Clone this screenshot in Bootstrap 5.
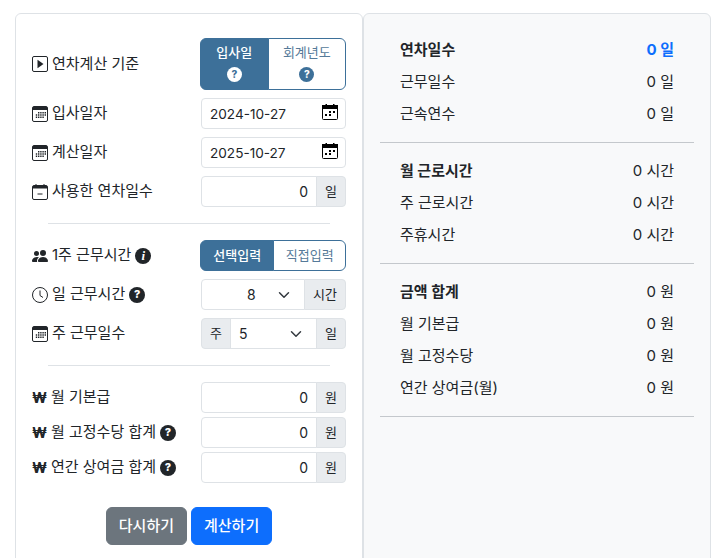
<!DOCTYPE html>
<html lang="ko">
<head>
    <meta charset="UTF-8">
    <meta name="viewport" content="width=device-width, initial-scale=1.0">
    <title>연차계산기</title>
    <link href="https://cdn.jsdelivr.net/npm/bootstrap@5.3.0/dist/css/bootstrap.min.css" rel="stylesheet">
    <style>
        html, body { height: 100%; overflow: hidden; }
        body {
            font-family: Inter, "Noto Sans CJK KR", sans-serif;
            font-size: 15px;
            color: #212529;
            background: #fff;
        }
        .page-wrap { padding: 13px 11px 0 15px; }
        .calc-card { min-height: 600px; border-radius: 6px; border: 1px solid #dee2e6; }
        .calc-input { padding: 24px 16px 20px 16px; }
        .calc-result { padding: 20px 16px; background: #f8f9fa; }
        .field-row { display: flex; align-items: center; justify-content: space-between; margin-bottom: 8px; }
        .field-row.tight { margin-bottom: 4px; }
        .field-label { display: flex; align-items: center; gap: 4px; font-size: 15px; white-space: nowrap; }
        .field-label svg { flex: none; }
        .field-box { width: 145px; flex: none; }
        .field-box .form-control, .field-box .form-select { font-size: 14px; height: 31px; }
        .field-box .input-group-text { font-size: 13px; height: 31px; padding: 0 8px; background: #e9ecef; }
        .date-wrap { position: relative; }
        .date-wrap .form-control { font-size: 13.6px; }
        .date-wrap svg { position: absolute; right: 8px; top: 6px; }
        .field-box .select-offset { padding-left: 45px; }
        .toggle-group { width: 146px; margin-left: -1px; }
        .toggle-group .btn { font-size: 13px; color: #557a99; border-color: #3d7099; background: #fff; padding: 0; height: 31px; }
        .toggle-group .btn.on { color: #fff; background: #3d7099; font-weight: 500; }
        .toggle-tall .btn { height: 52px; padding: 0 0 3px; line-height: 20px; }
        .help-dot {
            display: inline-flex; align-items: center; justify-content: center;
            width: 16px; height: 16px; border-radius: 50%;
            background: #212529; color: #fff; font-size: 11px; font-weight: 800; flex: none;
        }
        .help-dot.info { font-style: italic; font-family: "Liberation Serif", serif; font-size: 13px; }
        .help-dot.small-dot { width: 15px; height: 15px; font-size: 10px; margin-top: 5px; }
        .on .help-dot { background: #fff; color: #3d7099; }
        .toggle-group .btn:not(.on) .help-dot { background: #3d7099; color: #fff; }
        .won-mark { font-weight: 800; font-size: 14px; width: 15px; line-height: 1; }
        .soft-rule { margin: 16px 16px; border-color: #dee2e6; opacity: 1; }
        .action-row { margin-top: 24px; }
        .action-btn { font-size: 15px; font-weight: 500; padding: 0 12px; height: 38px; }
        .result-block { padding: 0 20px 12px; }
        .result-row { display: flex; justify-content: space-between; align-items: center; height: 32px; }
        .result-rule { margin: 0 0 12px; border-color: #c4c8cc; opacity: 1; }
        .accent-blue { color: #0d6efd; }
    </style>
</head>
<body>
    <svg width="0" height="0" class="d-block" aria-hidden="true">
        <symbol id="ic-cal" viewBox="0 0 16 16">
            <rect x=".5" y=".5" width="15" height="15" rx="1.5" fill="none" stroke="currentColor"/>
            <rect x="1" y="1" width="14" height="3" fill="currentColor"/>
            <path d="M6 6h1.4v1.4H6zM8.2 6h1.4v1.4H8.2zM10.4 6h1.4v1.4h-1.4zM12.6 6H14v1.4h-1.4zM3.8 8.3h1.4v1.4H3.8zM6 8.3h1.4v1.4H6zM8.2 8.3h1.4v1.4H8.2zM10.4 8.3h1.4v1.4h-1.4zM12.6 8.3H14v1.4h-1.4zM3.8 10.6h1.4V12H3.8zM6 10.6h1.4V12H6zM8.2 10.6h1.4V12H8.2zM10.4 10.6h1.4V12h-1.4z" fill="currentColor"/>
        </symbol>
        <symbol id="ic-date" viewBox="0 0 16 16">
            <rect x=".5" y="1.5" width="15" height="14" rx="1" fill="#fff" stroke="#000"/>
            <rect x="0" y="1" width="16" height="4" fill="#000"/>
            <path d="M3.5 0h1.5v2H3.500zM11 0h1.500v2H11z" fill="#000"/>
            <path d="M3 10h2v2H3zM7 10h2v2H7zM7 7h2v2H7zM11 7h2v2h-2z" fill="#000"/>
        </symbol>
    </svg>
    <div class="page-wrap">
        <div class="row g-0">
            <div class="col-6">
                <div class="calc-card calc-input">
                    <div class="field-row">
                        <span class="field-label">
                            <svg width="16" height="16" viewBox="0 0 16 16"><rect x=".5" y=".5" width="15" height="15" rx="1.500" fill="none" stroke="currentColor"/><path d="M5.500 3.700 11.500 8l-6 4.300z" fill="currentColor"/></svg>
                            연차계산 기준
                        </span>
                        <div class="btn-group toggle-group toggle-tall">
                            <button type="button" class="btn on" style="flex:68 0 0">입사일<br><span class="help-dot small-dot">?</span></button>
                            <button type="button" class="btn" style="flex:78 0 0">회계년도<br><span class="help-dot small-dot">?</span></button>
                        </div>
                    </div>
                    <div class="field-row">
                        <span class="field-label"><svg width="16" height="16"><use href="#ic-cal"/></svg>입사일자</span>
                        <div class="field-box date-wrap">
                            <input type="text" class="form-control form-control-sm" value="2024-10-27">
                            <svg width="16" height="16"><use href="#ic-date"/></svg>
                        </div>
                    </div>
                    <div class="field-row">
                        <span class="field-label"><svg width="16" height="16"><use href="#ic-cal"/></svg>계산일자</span>
                        <div class="field-box date-wrap">
                            <input type="text" class="form-control form-control-sm" value="2025-10-27">
                            <svg width="16" height="16"><use href="#ic-date"/></svg>
                        </div>
                    </div>
                    <div class="field-row mb-0">
                        <span class="field-label">
                            <svg width="16" height="16" viewBox="0 0 16 16"><rect x=".5" y="1.500" width="15" height="14" rx="1.500" fill="none" stroke="currentColor"/><path d="M1 2h14v2.500H1zM3.500 0h1v2h-1zM11.500 0h1v2h-1zM5.500 9.500h5v1h-5z" fill="currentColor"/></svg>
                            사용한 연차일수
                        </span>
                        <div class="field-box input-group input-group-sm">
                            <input type="text" class="form-control text-end" value="0">
                            <span class="input-group-text">일</span>
                        </div>
                    </div>

                    <hr class="soft-rule">

                    <div class="field-row">
                        <span class="field-label">
                            <svg width="16" height="16" viewBox="0 0 16 16"><path d="M7 14s-1 0-1-1 1-4 5-4 5 3 5 4-1 1-1 1H7Zm4-6a3 3 0 1 0 0-6 3 3 0 0 0 0 6Zm-5.800 6A2.200 2.200 0 0 1 5 13c0-1.400.700-2.800 2-3.700A6.500 6.500 0 0 0 5 9c-4 0-5 3-5 4s1 1 1 1h4.200ZM4.500 8a2.500 2.500 0 1 0 0-5 2.500 2.500 0 0 0 0 5Z" fill="currentColor"/></svg>
                            1주 근무시간 <span class="help-dot info">i</span>
                        </span>
                        <div class="btn-group toggle-group">
                            <button type="button" class="btn on" style="flex:74 0 0">선택입력</button>
                            <button type="button" class="btn" style="flex:72 0 0">직접입력</button>
                        </div>
                    </div>
                    <div class="field-row">
                        <span class="field-label">
                            <svg width="16" height="16" viewBox="0 0 16 16"><circle cx="8" cy="8" r="7.500" fill="none" stroke="currentColor"/><path d="M8 3.500V8.500L11 10.500" fill="none" stroke="currentColor"/></svg>
                            일 근무시간 <span class="help-dot">?</span>
                        </span>
                        <div class="field-box input-group input-group-sm">
                            <select class="form-select select-offset"><option>8</option></select>
                            <span class="input-group-text">시간</span>
                        </div>
                    </div>
                    <div class="field-row mb-0">
                        <span class="field-label"><svg width="16" height="16"><use href="#ic-cal"/></svg>주 근무일수</span>
                        <div class="field-box input-group input-group-sm">
                            <span class="input-group-text">주</span>
                            <select class="form-select"><option>5</option></select>
                            <span class="input-group-text">일</span>
                        </div>
                    </div>

                    <hr class="soft-rule">

                    <div class="field-row tight">
                        <span class="field-label"><span class="won-mark">₩</span>월 기본급</span>
                        <div class="field-box input-group input-group-sm">
                            <input type="text" class="form-control text-end" value="0">
                            <span class="input-group-text">원</span>
                        </div>
                    </div>
                    <div class="field-row tight">
                        <span class="field-label"><span class="won-mark">₩</span>월 고정수당 합계 <span class="help-dot">?</span></span>
                        <div class="field-box input-group input-group-sm">
                            <input type="text" class="form-control text-end" value="0">
                            <span class="input-group-text">원</span>
                        </div>
                    </div>
                    <div class="field-row mb-0">
                        <span class="field-label"><span class="won-mark">₩</span>연간 상여금 합계 <span class="help-dot">?</span></span>
                        <div class="field-box input-group input-group-sm">
                            <input type="text" class="form-control text-end" value="0">
                            <span class="input-group-text">원</span>
                        </div>
                    </div>

                    <div class="d-flex justify-content-center gap-1 action-row">
                        <button type="button" class="btn btn-secondary action-btn">다시하기</button>
                        <button type="button" class="btn btn-primary action-btn">계산하기</button>
                    </div>
                </div>
            </div>
            <div class="col-6">
                <div class="calc-card calc-result">
                    <div class="result-block">
                        <div class="result-row fw-bold"><span>연차일수</span><span class="accent-blue">0 일</span></div>
                        <div class="result-row"><span>근무일수</span><span>0 일</span></div>
                        <div class="result-row"><span>근속연수</span><span>0 일</span></div>
                    </div>
                    <hr class="result-rule">
                    <div class="result-block">
                        <div class="result-row"><span class="fw-bold">월 근로시간</span><span>0 시간</span></div>
                        <div class="result-row"><span>주 근로시간</span><span>0 시간</span></div>
                        <div class="result-row"><span>주휴시간</span><span>0 시간</span></div>
                    </div>
                    <hr class="result-rule">
                    <div class="result-block">
                        <div class="result-row"><span class="fw-bold">금액 합계</span><span>0 원</span></div>
                        <div class="result-row"><span>월 기본급</span><span>0 원</span></div>
                        <div class="result-row"><span>월 고정수당</span><span>0 원</span></div>
                        <div class="result-row"><span>연간 상여금(월)</span><span>0 원</span></div>
                    </div>
                    <hr class="result-rule">
                </div>
            </div>
        </div>
    </div>
</body>
</html>
